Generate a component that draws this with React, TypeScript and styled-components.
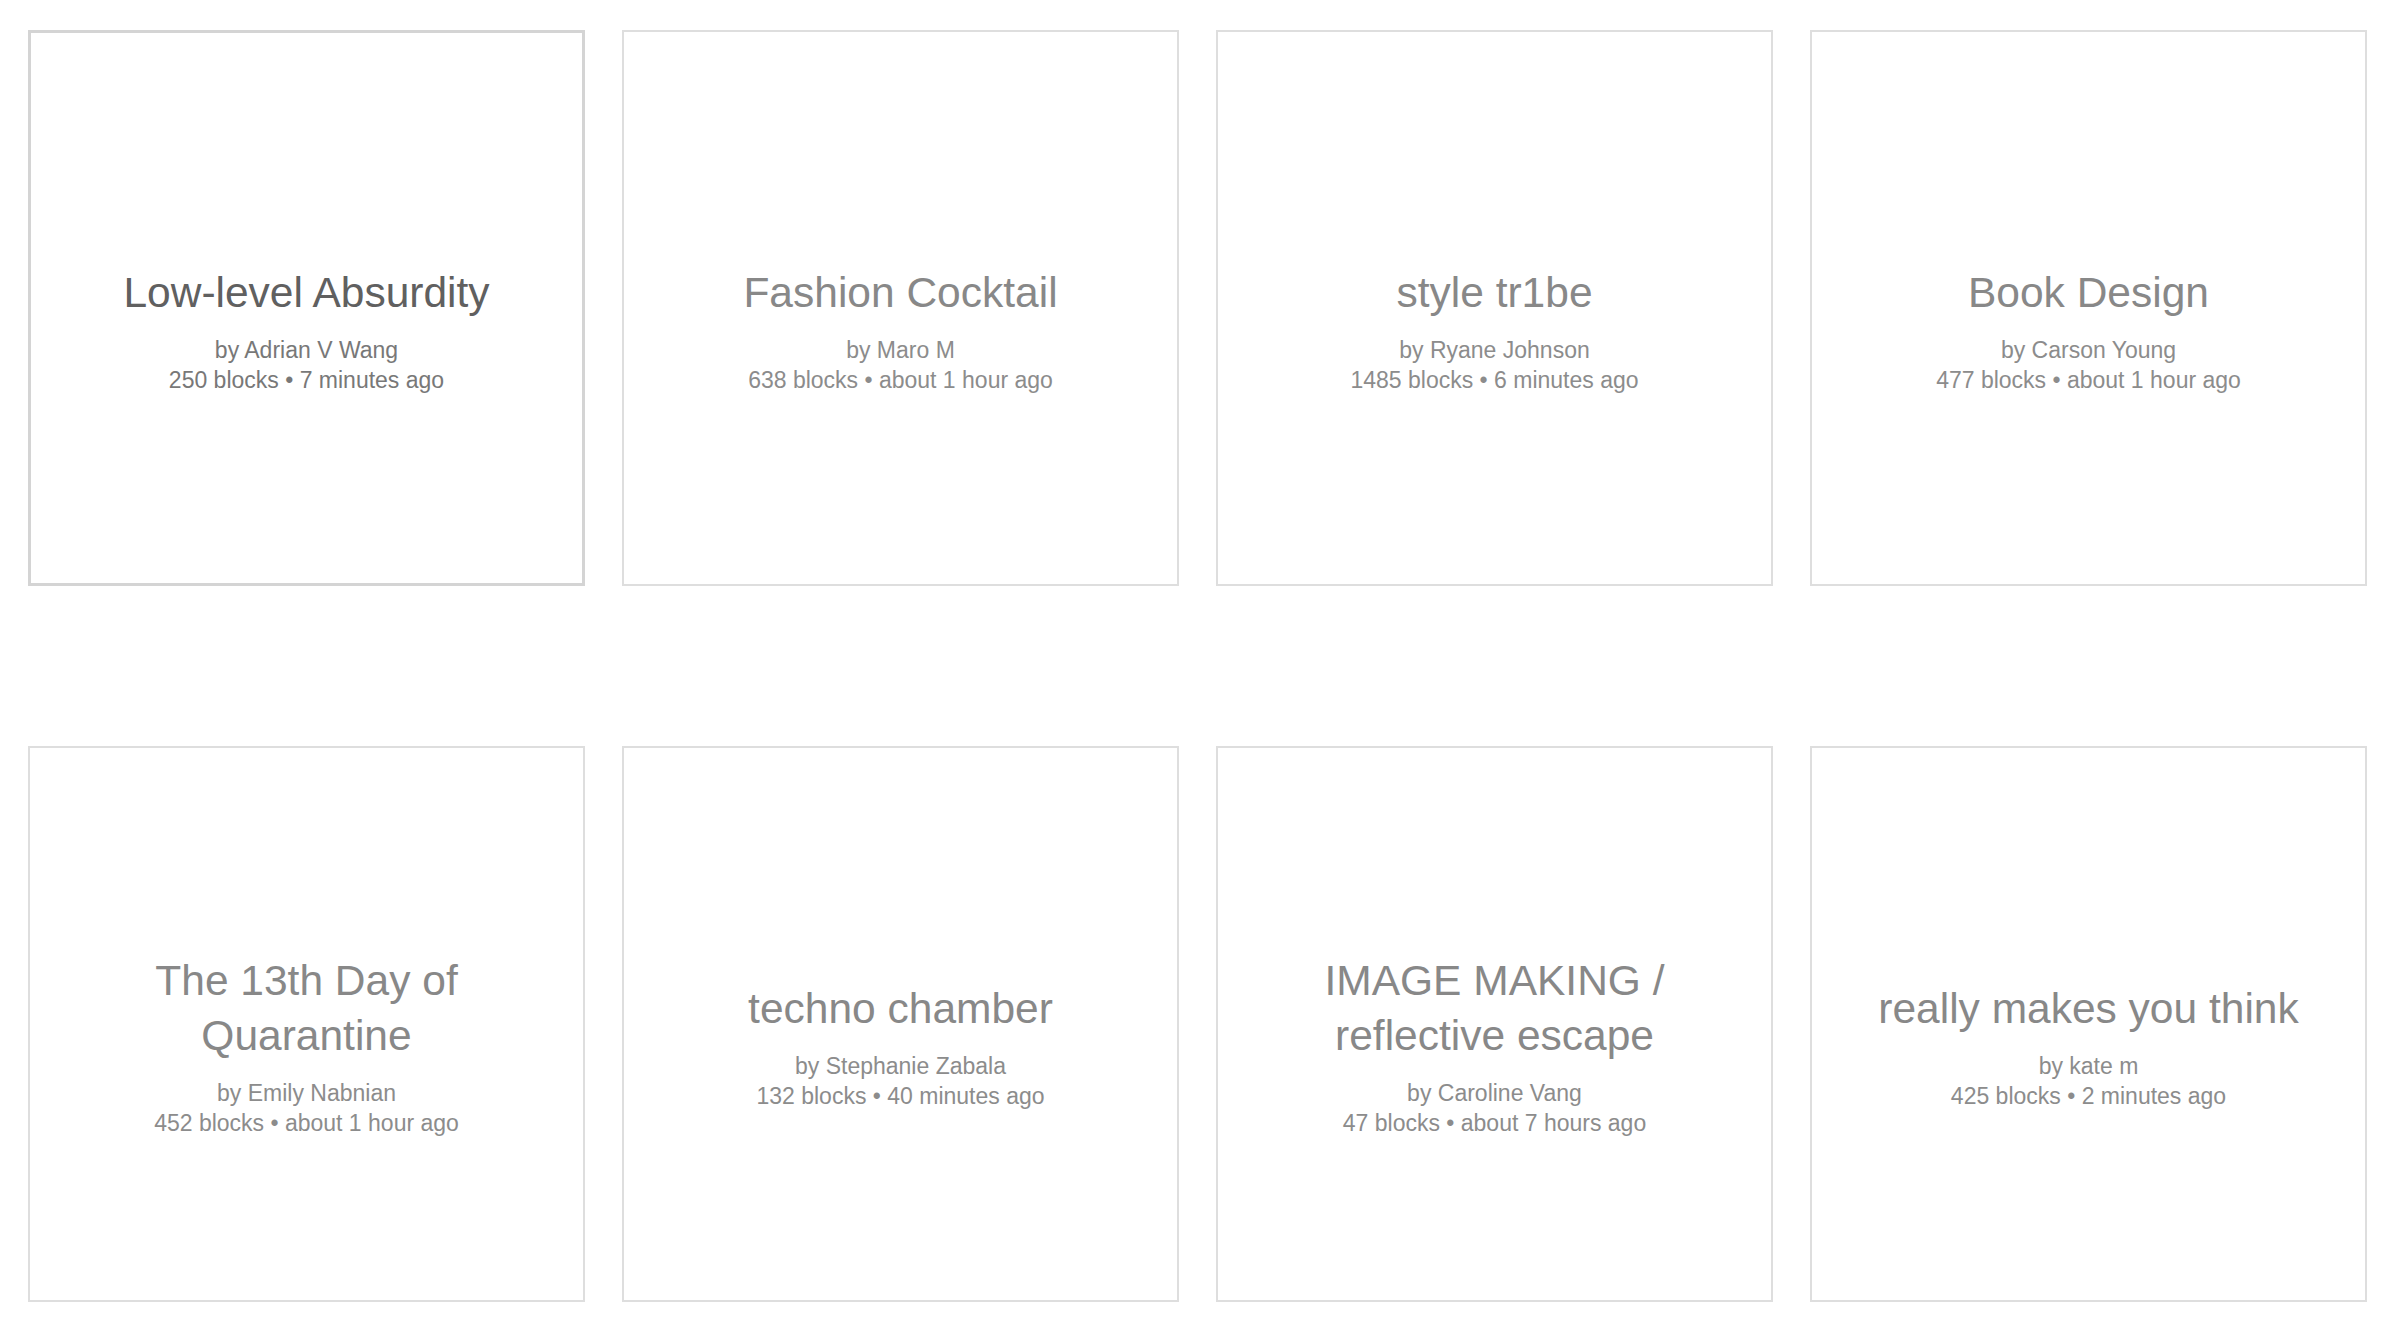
import React from 'react';
import styled, { createGlobalStyle } from 'styled-components';

interface Channel {
  title: string;
  author: string;
  blocks: number;
  updated: string;
  active?: boolean;
}

const channels: Channel[] = [
  { title: 'Low-level Absurdity', author: 'Adrian V Wang', blocks: 250, updated: '7 minutes ago', active: true },
  { title: 'Fashion Cocktail', author: 'Maro M', blocks: 638, updated: 'about 1 hour ago' },
  { title: 'style tr1be', author: 'Ryane Johnson', blocks: 1485, updated: '6 minutes ago' },
  { title: 'Book Design', author: 'Carson Young', blocks: 477, updated: 'about 1 hour ago' },
  { title: 'The 13th Day of Quarantine', author: 'Emily Nabnian', blocks: 452, updated: 'about 1 hour ago' },
  { title: 'techno chamber', author: 'Stephanie Zabala', blocks: 132, updated: '40 minutes ago' },
  { title: 'IMAGE MAKING / reflective escape', author: 'Caroline Vang', blocks: 47, updated: 'about 7 hours ago' },
  { title: 'really makes you think', author: 'kate m', blocks: 425, updated: '2 minutes ago' },
];

export default function App() {
  return (
    <>
      <GlobalStyle />
      <Grid>
        {channels.map((channel, index) => (
          <Card key={index} $active={channel.active}>
            <Title $active={channel.active}>{channel.title}</Title>
            <Meta $active={channel.active}>
              <div>by {channel.author}</div>
              <div>{channel.blocks} blocks • {channel.updated}</div>
            </Meta>
          </Card>
        ))}
      </Grid>
    </>
  );
}

const GlobalStyle = createGlobalStyle`
  html, body {
    margin: 0;
    padding: 0;
    background: #fff;
  }
  body {
    font-family: "Liberation Sans", Arial, sans-serif;
  }
`;

const Grid = styled.div`
  display: grid;
  grid-template-columns: repeat(4, 557px);
  column-gap: 37px;
  row-gap: 160px;
  padding: 30px 33px 30px 28px;
`;

const Card = styled.div<{ $active?: boolean }>`
  box-sizing: border-box;
  width: 557px;
  height: 556px;
  border: ${(p) => (p.$active ? '3px solid #d4d4d4' : '2px solid #dedede')};
  display: flex;
  flex-direction: column;
  align-items: center;
  justify-content: center;
  padding: 43px 50px 0;
  text-align: center;
  cursor: pointer;
`;

const Title = styled.div<{ $active?: boolean }>`
  font-size: 42.5px;
  line-height: 55px;
  color: ${(p) => (p.$active ? '#606060' : '#888')};
`;

const Meta = styled.div<{ $active?: boolean }>`
  margin-top: 15px;
  font-size: 23px;
  line-height: 30px;
  color: ${(p) => (p.$active ? '#787878' : '#8c8c8c')};
`;
